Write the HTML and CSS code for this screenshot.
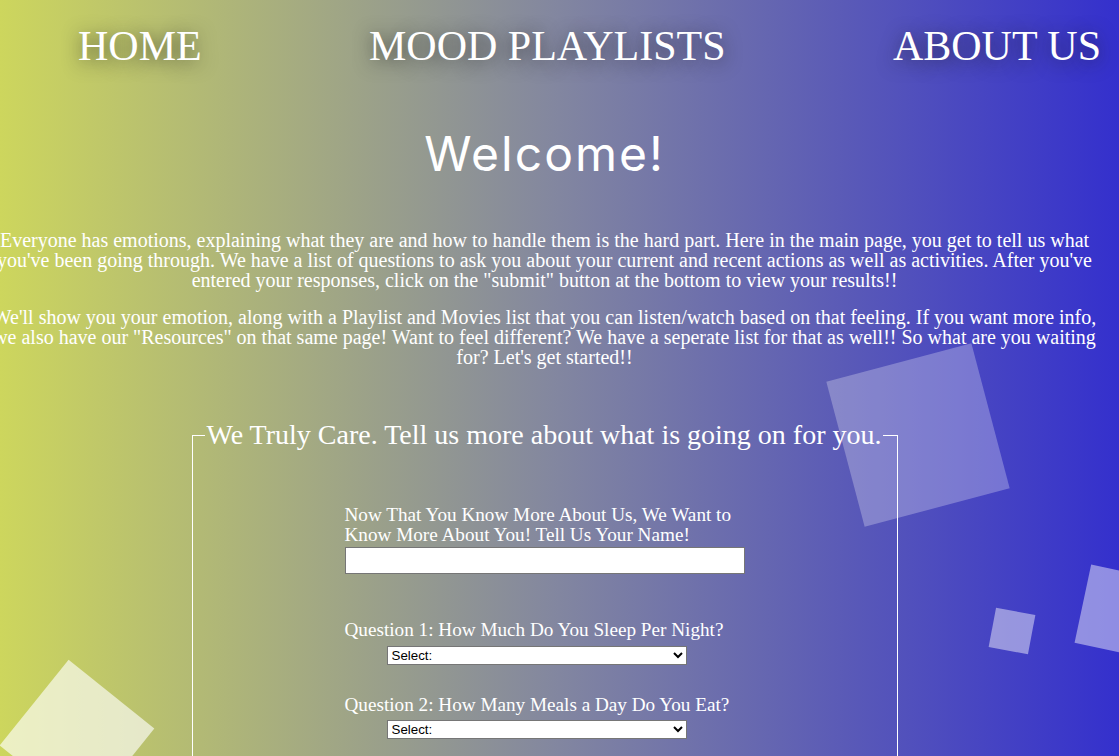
FILE: index.html
```html
<!DOCTYPE html>
<html lang="en">
<head>
<meta charset="utf-8">
<title>Mood Playlists</title>
<link rel="stylesheet" href="styles.css">
</head>
<body>
<div class="shapes" aria-hidden="true">
  <div class="sq sq-big"></div>
  <div class="sq sq-small"></div>
  <div class="sq sq-edge"></div>
  <div class="sq sq-corner"></div>
</div>
<nav class="nav">
  <a href="#" class="nav-link">HOME</a>
  <a href="#" class="nav-link">MOOD PLAYLISTS</a>
  <a href="#" class="nav-link">ABOUT US</a>
</nav>
<main class="page">
  <h1 class="welcome">Welcome!</h1>
  <p class="intro">Everyone has emotions, explaining what they are and how to handle them is the hard part. Here in the main page, you get to tell us what you've been going through. We have a list of questions to ask you about your current and recent actions as well as activities. After you've entered your responses, click on the "submit" button at the bottom to view your results!!</p>
  <p class="intro">We'll show you your emotion, along with a Playlist and Movies list that you can listen/watch based on that feeling. If you want more info, we also have our "Resources" on that same page! Want to feel different? We have a seperate list for that as well!! So what are you waiting for? Let's get started!!</p>
  <form class="quiz">
    <fieldset class="box">
      <legend class="box-title">We Truly Care. Tell us more about what is going on for you.</legend>
      <div class="questions">
        <div class="q q-name">
          <label class="q-label" for="name">Now That You Know More About Us, We Want to Know More About You! Tell Us Your Name!</label>
          <input class="text-in" id="name" type="text">
        </div>
        <div class="q">
          <label class="q-label" for="q1">Question 1: How Much Do You Sleep Per Night?</label>
          <select class="pick" id="q1"><option>Select:</option><option>Less than 5 hours</option><option>5-7 hours</option><option>8+ hours</option></select>
        </div>
        <div class="q">
          <label class="q-label" for="q2">Question 2: How Many Meals a Day Do You Eat?</label>
          <select class="pick" id="q2"><option>Select:</option><option>1</option><option>2</option><option>3+</option></select>
        </div>
        <div class="q">
          <label class="q-label" for="q3">Question 3: How Often Do You Exercise?</label>
          <select class="pick" id="q3"><option>Select:</option></select>
        </div>
      </div>
    </fieldset>
  </form>
</main>
</body>
</html>
```
FILE: styles.css
```css
html {
  background: linear-gradient(to right, #cdd65d 0%, #8286a0 50%, #3430cd 100%);
  min-height: 100%;
}
body {
  margin: 0;
  min-height: 756px;
  color: #fff;
  font-family: "Liberation Serif", "Times New Roman", serif;
  overflow: hidden;
  position: relative;
}
.shapes {
  position: absolute;
  inset: 0;
  overflow: hidden;
  z-index: 0;
  pointer-events: none;
}
.sq {
  position: absolute;
  background: rgba(255, 255, 255, 0.28);
}
.sq-big {
  width: 150px; height: 150px;
  left: 843px; top: 360px;
  transform: rotate(-14.8deg);
  background: rgba(255, 255, 255, 0.27);
}
.sq-small {
  width: 40px; height: 40px;
  left: 992px; top: 611px;
  transform: rotate(10.7deg);
  background: rgba(255, 255, 255, 0.45);
}
.sq-edge {
  width: 80px; height: 80px;
  left: 1082px; top: 572px;
  transform: rotate(12deg);
  background: rgba(255, 255, 255, 0.45);
}
.sq-corner {
  width: 110px; height: 110px;
  left: 22px; top: 682px;
  transform: rotate(38.8deg);
  background: rgba(255, 255, 255, 0.63);
}
.nav {
  position: relative;
  z-index: 1;
  display: flex;
  justify-content: space-between;
  padding: 23px 18px 0 78px;
}
.nav-link {
  color: #fff;
  text-decoration: none;
  font-size: 42px;
  line-height: 47px;
  text-shadow: 0 3px 18px rgba(30, 30, 30, 0.7);
}
.page {
  position: relative;
  z-index: 1;
  width: 1089px;
}
.welcome {
  margin: 55px 0 0;
  text-align: center;
  font-family: Inter, "Open Sans", sans-serif;
  font-weight: 400;
  font-size: 48px;
  line-height: 58px;
  letter-spacing: 2px;
}
.intro {
  width: 1110px;
  margin: 17px 0 0 -10.5px;
  text-align: center;
  font-size: 20px;
  line-height: 20px;
}
.welcome + .intro {
  margin-top: 47px;
}
.quiz {
  margin-top: 53px;
  display: flex;
  justify-content: center;
}
.box {
  width: 706px;
  box-sizing: border-box;
  margin: 0;
  border: 1px solid #fff;
  padding: 0 12px 40px;
}
.box-title {
  font-size: 28px;
  padding: 0 2px;
  line-height: 30px;
}
.questions {
  width: 400px;
  margin: 0 auto;
  padding-top: 55px;
}
.q {
  margin-bottom: 30px;
}
.q-name {
  margin-bottom: 46px;
}
.q-label {
  display: block;
  font-size: 19.2px;
  line-height: 19.5px;
}
.text-in {
  display: block;
  box-sizing: border-box;
  width: 400px;
  height: 27px;
  margin-top: 3px;
  border: 1px solid #767676;
  background: #fff;
  padding: 0 4px;
  font: 16px "Liberation Sans", Arial, sans-serif;
}
.pick {
  display: block;
  box-sizing: border-box;
  width: 300px;
  height: 19px;
  margin: 6px 0 0 42px;
  border: 1px solid #767676;
  border-radius: 0;
  background: #fff;
  color: #000;
  font: 13.33px "Liberation Sans", Arial, sans-serif;
  padding: 0;
}
```
